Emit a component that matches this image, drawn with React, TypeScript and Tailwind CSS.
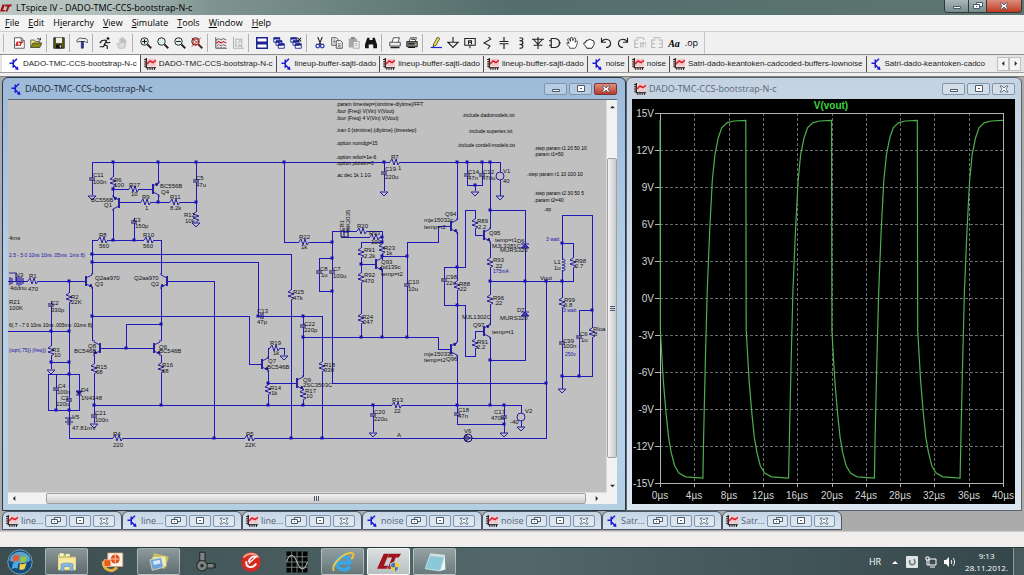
import type { ReactNode } from "react";
import clsx from "clsx";

// Menu entries, the underlined letter is given by its index
const menus = [
  { name: "File", key: 0 },
  { name: "Edit", key: 0 },
  { name: "Hierarchy", key: 1 },
  { name: "View", key: 0 },
  { name: "Simulate", key: 0 },
  { name: "Tools", key: 0 },
  { name: "Window", key: 0 },
  { name: "Help", key: 0 },
];

type DocKind = "schematic" | "plot";

const tabs: { kind: DocKind; title: string }[] = [
  { kind: "schematic", title: "DADO-TMC-CCS-bootstrap-N-c" },
  { kind: "plot", title: "DADO-TMC-CCS-bootstrap-N-c" },
  { kind: "schematic", title: "lineup-buffer-sajti-dado" },
  { kind: "plot", title: "lineup-buffer-sajti-dado" },
  { kind: "plot", title: "lineup-buffer-sajti-dado" },
  { kind: "schematic", title: "noise" },
  { kind: "plot", title: "noise" },
  { kind: "plot", title: "Satri-dado-keantoken-cadcoded-buffers-lownoise" },
  { kind: "schematic", title: "Satri-dado-keantoken-cadco" },
];

const minimized: { kind: DocKind; title: string }[] = [
  { kind: "plot", title: "line..." },
  { kind: "schematic", title: "line..." },
  { kind: "plot", title: "line..." },
  { kind: "schematic", title: "noise" },
  { kind: "plot", title: "noise" },
  { kind: "schematic", title: "Satr..." },
  { kind: "plot", title: "Satr..." },
];

// ---------------------------------------------------------------- icons

function LtLogo({ className }: { className: string }) {
  return (
    <svg viewBox="0 0 24 16" className={className} aria-hidden="true">
      <path d="M5 1h5L6 12h5l-2 3H0z" fill="#a01018" />
      <path d="M11 1h13l-2 4h-3l-4 10h-4l4-10h-5z" fill="#a01018" />
    </svg>
  );
}

function DocIcon({ kind }: { kind: DocKind }) {
  if (kind === "schematic") {
    return (
      <svg viewBox="0 0 16 16" className="w-3 h-3 shrink-0" aria-hidden="true">
        <path d="M2 7h5M7 2v11M7 6l5-5M7 9l6 6" stroke="#1a1ad8" strokeWidth="2" fill="none" />
        <path d="M14 16l-5-1 4-4z" fill="#1a1ad8" />
      </svg>
    );
  }
  return (
    <svg viewBox="0 0 16 16" className="w-3 h-3 shrink-0" aria-hidden="true">
      <path d="M4 1h12v10H4z" fill="#f3c8c8" />
      <path d="M3 0v13h13" stroke="#221111" strokeWidth="1.6" fill="none" />
      <path d="M0 2h3M0 5h3M0 8h3M0 11h3M5 13v3M8 13v3M11 13v3M14 13v3" stroke="#221111" strokeWidth="1.2" fill="none" />
      <path d="M4 8l4-4 4 2 4-3" stroke="#d8202c" strokeWidth="2" fill="none" />
    </svg>
  );
}

const lens = <circle cx="6" cy="6" r="5" fill="#dff1f1" stroke="#222" strokeWidth="1.3" />;
const handle = <path d="M10 10l5 5" stroke="#222" strokeWidth="2.4" />;
const gray = "#b4b4b4";

const icons: Record<string, ReactNode> = {
  "New schematic": (
    <>
      <path d="M2 1h9l4 4v10H2z" fill="#fff" stroke="#333" />
      <path d="M11 1v4h4" fill="none" stroke="#333" />
      <path d="M5 6l-2 6h4l1-2H6l2-4zM8 6h6l-1 2h-1l-2 4H8l2-4H8z" fill="#cc1c1c" />
    </>
  ),
  Open: (
    <>
      <path d="M1 14V4h5l1 2h6v3" fill="#f7ee70" stroke="#444" />
      <path d="M1 14l3-6h12l-3 6z" fill="#8d8a12" stroke="#333" />
      <path d="M9 3c2-2 4-1 5 1M14 1v3h-3" fill="none" stroke="#222" />
    </>
  ),
  Save: (
    <>
      <path d="M1 1h14v14H1z" fill="#5c5c18" stroke="#111" />
      <path d="M4 1h8v7H4z" fill="#eee" />
      <path d="M4 10h8v5H4z" fill="#111" />
      <path d="M9 11h2v3H9z" fill="#ddd" />
    </>
  ),
  "Control panel": (
    <>
      <path d="M1 5c2-4 5-4 8-3h4l3 3v2h-3l-1-1H4L2 7z" fill="#e8ecf4" stroke="#222" />
      <path d="M7 6h3v9H7z" fill="#2430b0" stroke="#111" strokeWidth="0.6" />
    </>
  ),
  Run: (
    <>
      <circle cx="12" cy="2" r="1.8" fill="#111" />
      <path d="M3 5l5-1 2 1-3 5 4 2v4M8 9l-2 4H1M9 6l2 2 4-1M1 8l3-3" stroke="#111" strokeWidth="1.5" fill="none" />
    </>
  ),
  Halt: <path d="M4 15l-3-6 1-1 3 2V3h2v5V1h2v7V2h2v7V4h2v7l-2 4z" fill="#dcdcdc" stroke={gray} />,
  "Zoom in": (
    <>
      {lens}
      {handle}
      <path d="M3 6h6M6 3v6" stroke="#111" strokeWidth="1.4" />
    </>
  ),
  Pan: (
    <>
      {lens}
      {handle}
    </>
  ),
  "Zoom out": (
    <>
      {lens}
      {handle}
      <path d="M3 6h6" stroke="#111" strokeWidth="1.4" />
    </>
  ),
  "Zoom fit": (
    <>
      {lens}
      {handle}
      <path d="M3 3h7v7H3zM1 1l13 12M13 1L1 13" stroke="#c82020" strokeWidth="1.2" fill="none" />
    </>
  ),
  "Autorange": (
    <>
      <path d="M1 0v15h15M1 4h2M1 8h2M4 15v-2M8 15v-2M12 15v-2" stroke="#333" fill="none" />
      <path d="M2 4l3-2 3 2 3-2 4 2" stroke="#333" fill="none" />
      <path d="M2 8l3-2 3 2 3-2 4 2" stroke="#c0202c" strokeWidth="1.4" fill="none" />
      <path d="M2 12l3-2 3 2 3-2 4 2" stroke="#7a3060" fill="none" />
    </>
  ),
  "Pick visible traces": (
    <path d="M2 0v15h14M5 12V3h8v9zM8 8l2-3 3 1M9 9l5 5" stroke={gray} strokeWidth="1.4" fill="none" />
  ),
  Tile: (
    <path d="M1 1h14v6H1zM1 9h14v6H1z" fill="#fff" stroke="#1c2490" strokeWidth="2" />
  ),
  Cascade: (
    <>
      <path d="M1 1h8v6H1zM4 5h8v6H4zM7 9h8v6H7z" fill="#fff" stroke="#1c2490" strokeWidth="1.2" />
      <path d="M1 2h8M4 6h8M7 10h8" stroke="#1c2490" strokeWidth="2.6" />
    </>
  ),
  "Close all": (
    <>
      <path d="M1 1h8v6H1zM4 5h8v6H4zM7 9h8v6H7z" fill="#fff" stroke="#1c2490" strokeWidth="1.2" />
      <path d="M1 2h8M4 6h8M7 10h8" stroke="#1c2490" strokeWidth="2.6" />
      <path d="M10 1l5 5M15 1l-5 5" stroke="#111" strokeWidth="1.4" />
    </>
  ),
  Cut: (
    <>
      <path d="M5 0l4 10M11 0L7 10" stroke="#222" strokeWidth="1.4" />
      <circle cx="5" cy="12" r="2.4" fill="none" stroke="#24309c" strokeWidth="1.6" />
      <circle cx="11" cy="12" r="2.4" fill="none" stroke="#24309c" strokeWidth="1.6" />
    </>
  ),
  Copy: (
    <>
      <path d="M1 1h6l2 2v8H1z" fill="#fff" stroke="#222" />
      <path d="M7 5h6l2 2v8H7z" fill="#fff" stroke="#222" />
      <path d="M3 4h3M3 6h3M3 8h3M9 9h4M9 11h4M9 13h4" stroke="#444" />
    </>
  ),
  Paste: (
    <>
      <path d="M1 2h11v12H1z" fill="#a8a8a8" />
      <path d="M4 0h5v3H4z" fill="#888" />
      <path d="M7 6h8v9H7z" fill="#eee" stroke="#999" />
      <path d="M9 9h4M9 11h4" stroke="#aaa" />
    </>
  ),
  Find: (
    <path d="M3 1h3v3h4V1h3l3 9v5h-5v-5H5v5H0v-5z" fill="#151515" />
  ),
  "Print setup": (
    <>
      <path d="M4 7l2-6h8l-2 6" fill="#fff" stroke="#222" />
      <path d="M1 7h14v5H1z" fill="#eee" stroke="#222" />
      <path d="M2 14h12" stroke="#222" strokeWidth="2" />
    </>
  ),
  Print: (
    <>
      <path d="M4 6l2-5h8l-2 5" fill="#fff" stroke="#222" />
      <path d="M1 6h14v7H1z" fill="#777" stroke="#111" />
      <path d="M3 9h8M3 14h9M7 3h5" stroke="#111" strokeWidth="1.6" />
      <path d="M12 10h2" stroke="#e6e040" strokeWidth="1.6" />
    </>
  ),
  Wire: (
    <>
      <path d="M4 13l1-4 5-9 3 2-5 9z" fill="#f0dc3c" stroke="#333" />
      <path d="M1 14h15" stroke="#1c24d0" strokeWidth="1.6" />
    </>
  ),
  Ground: <path d="M8 0v7M1 7h14l-7 7z" fill="none" stroke="#222" strokeWidth="1.5" />,
  "Label net": (
    <>
      <path d="M1 2h14v9H1zM8 11v4" fill="none" stroke="#222" strokeWidth="1.4" />
      <path d="M6 10V5h4v5M6 7h4" fill="none" stroke="#222" strokeWidth="1.4" />
    </>
  ),
  Resistor: <path d="M10 0l3 3-9 5 8 4-3 4" fill="none" stroke="#222" strokeWidth="1.4" />,
  Capacitor: <path d="M8 0v6M2 6h12M2 9h12M8 9v7" fill="none" stroke="#222" strokeWidth="1.6" />,
  Inductor: <path d="M6 1c6 0 6 4 0 4c6 0 6 5 0 5c6 0 6 5 0 5" fill="none" stroke="#222" strokeWidth="1.5" />,
  Diode: <path d="M0 3h16M8 0v16M2 3l6 7 6-7M2 11h12" fill="none" stroke="#222" strokeWidth="1.5" />,
  Component: <path d="M3 2h5c8 1 8 11 0 12H3zM0 5h3M0 11h3M13 8h3" fill="none" stroke="#222" strokeWidth="1.6" />,
  Move: (
    <path d="M5 15c0-3-4-4-4-7l2-1 1 2-2-6 2-1 2 4V1l2-1 1 5 2-4 2 1-1 5 3-2 1 1c-2 3-1 6-4 9z" fill="#fff" stroke="#222" />
  ),
  Drag: (
    <path d="M5 15c-1-3-4-4-4-7l3-1V5l3-1 2-1 2 1 3 1 1 3c0 3-2 4-3 7z" fill="#fff" stroke="#222" strokeWidth="1.3" />
  ),
  Undo: <path d="M2 1v6h6M2 7c4-7 13-4 12 3c-1 3-3 4-6 4" fill="none" stroke="#222" strokeWidth="1.5" />,
  Redo: <path d="M14 1v6H8M14 7C10 0 1 3 2 10c1 3 3 4 6 4" fill="none" stroke="#222" strokeWidth="1.5" />,
  Rotate: (
    <path d="M6 4H1v10h5M1 9h4M9 14V8h7v6M12 8v6M3 1h9l2 3" fill="none" stroke={gray} strokeWidth="1.4" />
  ),
  Mirror: (
    <path d="M6 4H1v10h5M1 9h4M10 4h5v10h-5M15 9h-4M3 1h10" fill="none" stroke={gray} strokeWidth="1.4" />
  ),
};

const toolGroups = [
  ["New schematic", "Open"],
  ["Save"],
  ["Control panel"],
  ["Run", "Halt"],
  ["Zoom in", "Pan", "Zoom out", "Zoom fit"],
  ["Autorange", "Pick visible traces"],
  ["Tile", "Cascade", "Close all"],
  ["Cut", "Copy", "Paste", "Find"],
  ["Print setup", "Print"],
  [
    "Wire", "Ground", "Label net", "Resistor", "Capacitor", "Inductor", "Diode",
    "Component", "Move", "Drag", "Undo", "Redo", "Rotate", "Mirror",
  ],
];

const arrowPaths = {
  up: "M0 4l3-3 3 3z",
  down: "M0 2h6L3 5z",
  left: "M4 0v6L1 3z",
  right: "M2 0l3 3-3 3z",
};

function Arrow({ to }: { to: keyof typeof arrowPaths }) {
  return (
    <svg viewBox="0 0 6 6" className="w-[5px] h-[5px]" aria-hidden="true">
      <path d={arrowPaths[to]} fill="#2c2c2c" />
    </svg>
  );
}

// ---------------------------------------------------------------- schematic

// Every wire is a polyline on the sheet
const wires = [
  "92,161 500,161",
  "92,161 92,194",
  "113,161 113,196",
  "113,188 152,188",
  "158,161 158,182",
  "158,194 158,201",
  "119,201 196,201",
  "196,161 196,221",
  "113,208 113,239",
  "92,273 92,239 161,239 161,273",
  "134,217 134,239",
  "90,253 291,253 291,437",
  "92,261 258,261 258,315 322,315 322,437",
  "8,280 85,280",
  "168,280 214,280 214,437",
  "92,286 92,340",
  "161,286 161,340",
  "92,315 249,315 249,363 262,363",
  "161,323 126,323 126,347",
  "101,347 154,347",
  "94,354 94,422",
  "161,354 161,404",
  "94,404 521,404",
  "69,280 69,437 546,437 546,280",
  "8,330 69,330",
  "51,300 51,368",
  "51,361 69,361",
  "48,373 79,373 79,409 48,409 48,373",
  "56,373 56,409",
  "284,161 284,241 332,241",
  "332,230 382,230 382,259",
  "341,236 382,236",
  "382,241 361,241 361,336",
  "332,230 332,382 546,382",
  "361,263 375,263",
  "382,268 382,336",
  "382,255 407,255",
  "407,336 407,241 438,241 438,225 450,225",
  "332,257 319,257 319,290 332,290",
  "384,161 384,190",
  "303,315 303,376",
  "303,336 438,336 438,348 450,348",
  "268,358 268,347 284,347 284,354",
  "268,369 268,404",
  "268,382 297,382",
  "303,388 303,404",
  "373,404 373,431",
  "457,161 457,219",
  "457,231 457,341",
  "457,354 457,423 504,423",
  "457,266 465,266 465,209 475,209 475,234 483,234",
  "457,266 444,266 444,304 465,304 465,355 475,355 475,330 483,330",
  "490,161 490,228",
  "490,241 490,324",
  "490,336 490,404",
  "467,161 467,184 482,184 482,161",
  "475,184 475,190",
  "500,161 500,195",
  "490,209 525,209 525,359 490,359",
  "490,280 573,280 573,242 562,242",
  "562,388 562,214 592,214 592,375 562,375",
  "592,309 579,309 579,375",
  "504,404 504,432",
  "521,404 521,426",
];

const nodes = [
  [113, 161], [158, 161], [196, 161], [284, 161], [384, 161], [457, 161], [467, 161], [482, 161], [490, 161],
  [113, 188], [158, 201], [196, 201], [113, 239], [134, 239], [92, 253], [92, 261], [69, 280],
  [92, 315], [161, 323], [126, 347], [51, 330], [69, 330], [51, 361], [69, 361], [69, 373], [56, 409], [69, 409],
  [94, 404], [161, 404], [268, 404], [303, 404], [373, 404], [457, 404], [490, 404], [504, 404], [504, 423],
  [214, 437], [291, 437], [322, 437], [268, 382], [258, 315], [303, 315], [303, 336], [361, 336], [382, 336], [407, 336],
  [332, 241], [332, 257], [332, 290], [382, 236], [382, 241], [382, 255], [407, 255], [361, 263],
  [457, 266], [457, 304], [490, 209], [490, 280], [525, 280], [546, 280], [562, 280], [562, 242],
  [490, 359], [546, 382], [592, 309], [562, 375], [579, 375], [475, 184],
];

const vResistors = [
  [113, 181], [196, 216], [69, 297], [51, 350], [94, 368], [161, 367], [291, 294], [361, 252], [361, 277], [361, 318],
  [382, 248], [322, 366], [268, 389], [303, 394], [457, 285], [475, 223], [490, 262], [490, 299], [475, 343],
  [573, 262], [562, 302], [592, 332],
];

const hResistors = [
  [134, 188], [146, 201], [175, 201], [103, 239], [149, 239], [33, 280], [118, 437], [250, 437], [304, 241],
  [362, 230], [375, 236], [395, 161], [397, 404], [275, 347],
];

const capacitors = [
  [92, 178], [196, 180], [134, 221], [51, 304], [56, 388], [69, 399], [94, 415], [319, 271], [332, 271], [407, 284],
  [384, 172], [303, 325], [373, 414], [444, 279], [457, 413], [467, 174], [482, 174], [562, 342], [579, 336], [504, 416],
];

const grounds = [
  [92, 195], [196, 222], [51, 369], [94, 423], [384, 191], [284, 355], [373, 432], [475, 191], [500, 195],
  [562, 388], [504, 432], [521, 426],
];

// x, y of the base bar, side of the collector and emitter, arrow end
const transistors: [number, number, number, string][] = [
  [119, 202, -1, "up"],
  [153, 188, 1, "up"],
  [86, 280, 1, "down"],
  [167, 280, -1, "down"],
  [100, 347, -1, "down"],
  [154, 347, 1, "down"],
  [262, 363, 1, "down"],
  [297, 382, 1, "down"],
  [376, 263, 1, "down"],
  [451, 225, 1, "down"],
  [451, 348, 1, "up"],
  [484, 234, 1, "down"],
  [484, 330, 1, "up"],
];

const labels: [number, number, string][] = [
  [93, 176, "C11"], [93, 183, "100n"], [114, 181, "R6"], [114, 186, "100"], [129, 186, "R27"], [131, 195, "10"],
  [91, 201, "BC556B"], [104, 206, "Q1"], [142, 198, "R9"], [145, 209, "1"], [170, 198, "R11"], [170, 209, "8.2k"],
  [160, 187, "BC556B"], [161, 193, "Q4"], [196, 179, "C5"], [196, 186, "47u"], [184, 216, "R12"], [185, 222, "10k"],
  [133, 221, "C3"], [135, 227, "150p"], [99, 236, "R8"], [99, 247, "560"], [143, 236, "R10"], [143, 247, "560"],
  [9, 239, "4ms"], [95, 279, "Q2aa970"], [95, 285, "Q3"], [134, 279, "Q2aa970"], [151, 285, "Q2"],
  [16, 276, "V3"], [29, 277, "R1"], [28, 290, "470"], [10, 289, "4ddnu"], [9, 303, "R21"], [9, 309, "100K"],
  [51, 304, "C2"], [51, 311, "330p"], [71, 298, "R2"], [71, 303, "22K"],
  [52, 351, "R3"], [54, 356, "10"],
  [88, 347, "Q8"], [74, 352, "BC546B"], [159, 348, "Q6"], [159, 352, "BC546B"], [96, 368, "R15"], [96, 373, "68"],
  [162, 366, "R16"], [162, 372, "68"], [58, 387, "C4"], [57, 393, "100n"], [61, 399, "C3"], [56, 405, "220u"],
  [81, 391, "D4"], [81, 399, "1N4148"], [72, 418, "V5"], [72, 429, "47.81mV"], [95, 414, "C21"], [95, 421, "100n"],
  [113, 435, "R4"], [113, 446, "220"], [246, 435, "R5"], [245, 446, "22K"], [299, 238, "R22"], [301, 248, "1k"],
  [391, 158, "R7"], [398, 169, "1"], [385, 170, "C19"], [385, 178, "220u"], [357, 227, "R20"], [369, 234, "R93"],
  [371, 243, "100"], [384, 249, "R23"], [386, 254, "1k"], [364, 251, "R91"], [364, 257, "2.2k"], [364, 276, "R92"],
  [364, 282, "470"], [381, 263, "Q93"], [381, 268, "bd139c"], [381, 275, "temp=t2"], [320, 270, "C8"], [321, 276, "1u"],
  [333, 270, "C7"], [333, 277, "100u"], [408, 283, "C10"], [408, 290, "10u"], [293, 293, "R25"], [293, 299, "47k"],
  [257, 312, "C13"], [257, 323, "47p"], [304, 325, "C22"], [304, 331, "220p"], [362, 318, "R24"], [363, 323, "247"],
  [270, 344, "R19"], [273, 354, "1k"], [268, 362, "Q7"], [267, 368, "BC546B"], [324, 366, "R18"], [324, 371, "330"],
  [303, 381, "Q9"], [303, 386, "2SC3503C"], [270, 389, "R14"], [271, 394, "1k"], [305, 392, "R17"], [306, 397, "10"],
  [392, 401, "R13"], [394, 412, "22"], [374, 413, "C20"], [374, 420, "220u"], [397, 436, "A"],
  [468, 173, "C14"], [468, 179, "47n"], [483, 173, "C12"], [482, 179, "470u"], [503, 172, "V1"], [503, 182, "40"],
  [445, 215, "Q94"], [424, 221, "mje15032c"], [424, 228, "temp=t2"], [477, 222, "R89"], [478, 228, "2.2"],
  [489, 234, "Q95"], [495, 241, "temp=t1"], [492, 247, "MJL3281C"], [500, 251, "MURS320"], [517, 242, "D6"],
  [493, 261, "R93"], [494, 267, ".22"], [540, 279, "Vout"], [446, 278, "C98"], [446, 284, "22u"], [459, 285, "R88"],
  [460, 290, "22"], [493, 299, "R96"], [494, 304, ".22"], [517, 311, "D7"], [500, 319, "MURS320"],
  [462, 318, "MJL1302C"], [473, 326, "Q97"], [492, 333, "temp=t1"], [477, 343, "R91"], [477, 348, "2.2"],
  [424, 355, "mje15033c"], [424, 361, "temp=t2"], [446, 360, "Q96"], [458, 411, "C18"], [458, 417, "47n"],
  [494, 413, "C17"], [491, 419, "470u"], [525, 412, "V2"], [510, 423, "-40"], [464, 432, "V6"],
  [554, 263, "L1"], [554, 269, "1u"], [575, 262, "R98"], [575, 267, "2.7"], [564, 301, "R99"], [564, 306, "6.8"],
  [563, 342, "C99"], [563, 347, "100n"], [580, 335, "C6"], [581, 341, "1u"], [593, 330, "Rloa"], [594, 335, "8"],
];

const directives: [number, number, string][] = [
  [336, 105, ".param timestep=(simtime-dlytime)/FFT"],
  [336, 112, ".four {Freq} V(Vin) V(Vout)"],
  [336, 119, ".four {Freq} 4 V(Vin) V(Vout)"],
  [336, 131, ".tran 0 {simtime} {dlytime} {timestep}"],
  [336, 144, ".option numdgt=15"],
  [336, 158, ".option reltol=1e-6"],
  [336, 164, ".option plotwin=0"],
  [336, 176, ".ac dec 1k 1 1G"],
  [462, 116, ".include dadomodels.txt"],
  [468, 132, ".include supertex.txt"],
  [457, 146, ".include cordell-models.txt"],
  [534, 149, ".step param t1 20 50 10"],
  [534, 155, ".param t1=50"],
  [527, 175, ".step param r1 10 100 10"],
  [534, 194, ".step param t2  30 50 5"],
  [534, 201, ".param t2=40"],
  [544, 210, ".op"],
  [9, 326, "6(.7 -.7 0 10ns 10ns .005ms .01ms 8)"],
];

const notes: [number, number, string][] = [
  [9, 256, "2.5 -.5 0 10ns 10ns .05ms .1ms 8)"],
  [9, 351, "{sqrt(.75)} {freq})"],
  [546, 240, "3 watt"],
  [493, 272, "175mA"],
  [563, 311, "3 watt"],
  [565, 355, "250v"],
];

const SHEET = "#c0c0c0";

function Schematic() {
  return (
    <svg
      viewBox="8 99 598 391"
      preserveAspectRatio="xMinYMin meet"
      className="block w-full h-full font-['Liberation_Sans',sans-serif]"
      role="img"
      aria-label="Amplifier schematic"
    >
      <g fill="none" stroke="#2018b8" strokeWidth="1" shapeRendering="crispEdges">
        {wires.map((points) => (
          <polyline key={points} points={points} />
        ))}
      </g>
      {nodes.map(([x, y]) => (
        <rect key={`${x}-${y}`} x={x - 1.5} y={y - 1.5} width="3" height="3" fill="#1810b0" />
      ))}

      <g fill="none" stroke="#2820a0" strokeWidth="1">
        {vResistors.map(([x, y]) => (
          <g key={`${x}-${y}`} transform={`translate(${x} ${y})`}>
            <rect x="-2" y="-5" width="4" height="10" fill={SHEET} stroke="none" />
            <path d="M0-5l-3 2 6 2-6 2 6 2-3 2" />
          </g>
        ))}
        {hResistors.map(([x, y]) => (
          <g key={`${x}-${y}`} transform={`translate(${x} ${y})`}>
            <rect x="-5" y="-2" width="10" height="4" fill={SHEET} stroke="none" />
            <path d="M-5 0l2-3 2 6 2-6 2 6 2-3" />
          </g>
        ))}
        {capacitors.map(([x, y]) => (
          <g key={`${x}-${y}`} transform={`translate(${x} ${y})`}>
            <rect x="-1" y="-1" width="2" height="2" fill={SHEET} stroke="none" />
            <path d="M-3-1h6M-3 1h6" stroke="#18106c" />
          </g>
        ))}
        <path d="M261 312v6M263 312v6" stroke="#18106c" />
        {grounds.map(([x, y]) => (
          <path key={`${x}-${y}`} d={`M${x - 4} ${y}h8l-4 4z`} />
        ))}
        {transistors.map(([x, y, side, arrow]) => (
          <g key={`${x}-${y}`} transform={`translate(${x} ${y}) scale(${side} 1)`}>
            <path d="M0-5v10" strokeWidth="2" />
            <path d="M0-3l6-3v-2M0 3l6 3v2" />
            <path d={arrow === "up" ? "M2-5l3-1-1 3z" : "M3 5l3 1-1-3z"} fill="#18106c" />
          </g>
        ))}

        {/* Sources */}
        <circle cx="500" cy="175" r="4" fill={SHEET} />
        <circle cx="521" cy="416" r="4" fill={SHEET} />
        <circle cx="468" cy="437" r="4" fill={SHEET} stroke="#18106c" />
        <path d="M463 437h10M466 434l4 3-4 3z" stroke="#18106c" />
        <path d="M65 417h8M67 419h4M65 421h8M67 423h4" stroke="#18106c" strokeWidth="1.2" />
        <path d="M10 276v8M12 277v6M17 276v8M19 275v10M21 276v8M23 277v6M9 272h7v8" strokeWidth="1.2" />

        {/* Diodes, inductor, ferrite and the jfet on the bias rail */}
        <path d="M76 390h6l-3 4zM76 394h6" fill="#18106c" />
        <path d="M521 247h8l-4-4zM521 243h8M521 315h8l-4-4zM521 311h8" fill="#4038a8" />
        <rect x="560" y="259" width="4" height="10" fill={SHEET} stroke="none" />
        <path d="M562 258c4 0 4 3 0 3c4 0 4 3 0 3c4 0 4 3 0 3c4 0 4 3 0 3" />
        <path d="M341 231v5M344 227v9M348 227v9M349 231h-6M341 236h8" stroke="#18106c" />
      </g>

      <g fontSize="6" fill="#101018">
        {labels.map(([x, y, text]) => (
          <text key={`${x}-${y}`} x={x} y={y}>{text}</text>
        ))}
        <text transform="translate(344 230) rotate(-90)">FB1</text>
        <text transform="translate(350 230) rotate(-90)">BK2035</text>
      </g>
      <g fontSize="5" fill="#000">
        {directives.map(([x, y, text]) => (
          <text key={`${x}-${y}`} x={x} y={y}>{text}</text>
        ))}
      </g>
      <g fontSize="5" fill="#1c14a8">
        {notes.map(([x, y, text]) => (
          <text key={`${x}-${y}`} x={x} y={y}>{text}</text>
        ))}
      </g>
    </svg>
  );
}

// ---------------------------------------------------------------- waveform

const PLOT = { left: 660, right: 1003, top: 113, bottom: 483 };
const volts = [15, 12, 9, 6, 3, 0, -3, -6, -9, -12, -15];
const times = [0, 4, 8, 12, 16, 20, 24, 28, 32, 36, 40];

const plotX = (us: number) => PLOT.left + ((PLOT.right - PLOT.left) * us) / 40;
const plotY = (v: number) => PLOT.top + ((PLOT.bottom - PLOT.top) * (15 - v)) / 30;

// One 10us period: exponential fall, then a slower settling rise
const fall = [[0.05, -2.6], [0.2, -4.5], [0.4, -6.8], [0.7, -9.3], [1, -11.3], [1.3, -12.5], [1.7, -13.6], [2.2, -14.2], [3, -14.5], [5, -14.6]];
const rise = [[5.1, -11], [5.3, -5], [5.5, 0.5], [5.8, 5.5], [6.1, 9.5], [6.4, 11.6], [6.8, 13], [7.2, 13.8], [7.8, 14.2], [8.6, 14.35], [10, 14.4]];

function tracePoints() {
  const points = [[0, 14.4]];
  for (let start = 0; start < 40; start += 10) {
    for (const [t, v] of [...fall, ...rise]) points.push([start + t, v]);
  }
  return points.map(([t, v]) => `${plotX(t).toFixed(1)},${plotY(v).toFixed(1)}`).join(" ");
}

function Waveform() {
  return (
    <svg
      viewBox="632 99 383 404"
      preserveAspectRatio="xMinYMin meet"
      className="block w-full h-full font-['Liberation_Sans',sans-serif]"
      role="img"
      aria-label="V(vout) over time"
    >
      <g stroke="#6c6c6c" strokeDasharray="3 2" shapeRendering="crispEdges">
        {volts.slice(1, -1).map((v) => (
          <path key={v} d={`M${PLOT.left} ${Math.round(plotY(v))}H${PLOT.right}`} />
        ))}
        {times.slice(1, -1).map((t) => (
          <path key={t} d={`M${Math.round(plotX(t))} ${PLOT.top}V${PLOT.bottom}`} />
        ))}
      </g>
      <g stroke="#b4b4b4" fill="none" shapeRendering="crispEdges">
        <path d={`M${PLOT.left} ${PLOT.top}H${PLOT.right}V${PLOT.bottom}H${PLOT.left}z`} />
        {volts.map((v) => (
          <path key={v} d={`M${PLOT.left - 5} ${Math.round(plotY(v))}h5`} />
        ))}
        {times.map((t) => (
          <path key={t} d={`M${Math.round(plotX(t))} ${PLOT.bottom}v4`} />
        ))}
      </g>
      <polyline points={tracePoints()} fill="none" stroke="#4fae4f" strokeWidth="1.2" />
      <g fontSize="10" fill="#d4d4d4">
        {volts.map((v) => (
          <text key={v} x={PLOT.left - 6} y={Math.round(plotY(v)) + 4} textAnchor="end">{v}V</text>
        ))}
        {times.map((t) => (
          <text key={t} x={Math.round(plotX(t))} y="499" textAnchor="middle">{t}µs</text>
        ))}
      </g>
      <text x="831" y="109" fontSize="10" fontWeight="bold" fill="#3fd43f" textAnchor="middle">V(vout)</text>
    </svg>
  );
}

// ---------------------------------------------------------------- windows

type Glyph = "min" | "max" | "restore" | "close";

function CaptionGlyph({ glyph }: { glyph: Glyph }) {
  return (
    <svg viewBox="0 0 10 8" className="w-[10px] h-2" aria-hidden="true">
      {glyph === "min" && <path d="M1.5 4.5h7v2h-7z" fill="#fff" stroke="#4a5868" />}
      {glyph === "max" && (
        <>
          <path d="M1.5.5h7v6h-7z" fill="#fff" stroke="#4a5868" />
          <path d="M4 3h2v1H4z" fill="#4a5868" />
        </>
      )}
      {glyph === "restore" && (
        <>
          <path d="M3.5.5h6v4h-6z" fill="#fff" stroke="#4a5868" />
          <path d="M.5 2.5h6v4h-6z" fill="#fff" stroke="#4a5868" />
          <path d="M3 4h1v1H3z" fill="#4a5868" />
        </>
      )}
      {glyph === "close" && (
        <path d="M1 1h2l2 2 2-2h2L7 4l2 3H7L5 5 3 7H1l2-3z" fill="#fff" stroke="#4a5868" strokeWidth="0.8" />
      )}
    </svg>
  );
}

function CaptionButton({ glyph, label, danger }: { glyph: Glyph; label: string; danger?: boolean }) {
  return (
    <button
      aria-label={label}
      className={clsx(
        "flex items-center justify-center w-[23px] h-3 rounded-xs border",
        danger
          ? "border-[#7c3434] bg-linear-to-b from-[#e09080] to-[#b83424]"
          : "border-[#7f94ad] bg-white/25",
      )}
    >
      <CaptionGlyph glyph={glyph} />
    </button>
  );
}

function ChildWindow({ kind, title, active, className, children }: {
  kind: DocKind;
  title: string;
  active?: boolean;
  className: string;
  children: ReactNode;
}) {
  return (
    <section
      className={clsx(
        "flex flex-col min-w-0 rounded-t-md border pl-[5px] pb-[6px]",
        active
          ? "border-[#26384a] bg-linear-to-b from-[#9dbad8] via-[#b9d2ea] to-[#b4cfe2]"
          : "border-[#59636e] bg-linear-to-b from-[#c4d2e1] to-[#dbe6f1]",
        className,
      )}
    >
      <header className="flex items-center gap-[2px] h-[21px] shrink-0 pl-[2px]">
        <DocIcon kind={kind} />
        <h2 className={clsx("grow truncate pl-px text-[9px]", active ? "text-[#1c2a3c]" : "text-[#5a6878]")}>
          {title}
        </h2>
        <CaptionButton glyph="min" label="Minimize" />
        <CaptionButton glyph="max" label="Maximize" />
        <CaptionButton glyph="close" label="Close" danger={active} />
      </header>
      {children}
    </section>
  );
}

function SheetPane() {
  return (
    <div className="grid grow min-h-0 grid-cols-[1fr_11px] grid-rows-[1fr_12px] border-t border-[#5c6470] bg-[#c0c0c0]">
      <div className="min-w-0 min-h-0 overflow-hidden">
        <Schematic />
      </div>
      <div className="flex flex-col bg-[#f1f1f1] border-l border-[#dcdcdc]">
        <button aria-label="Scroll up" className="h-[58px] pt-[5px] flex justify-center"><Arrow to="up" /></button>
        <button
          aria-label="Vertical position"
          className="h-[300px] shrink-0 rounded-xs border border-[#a0a0a0] bg-linear-to-r from-[#f4f4f4] to-[#c9c9c9] flex flex-col items-center justify-center gap-px"
        >
          <span className="w-[5px] h-px bg-gray-600" />
          <span className="w-[5px] h-px bg-gray-600" />
          <span className="w-[5px] h-px bg-gray-600" />
        </button>
        <button aria-label="Scroll down" className="grow pb-1 flex items-end justify-center"><Arrow to="down" /></button>
      </div>
      <div className="flex bg-[#f1f1f1] border-t border-[#dcdcdc]">
        <button aria-label="Scroll left" className="w-[38px] pl-1 flex items-center"><Arrow to="left" /></button>
        <button
          aria-label="Horizontal position"
          className="grow rounded-xs border border-[#a0a0a0] bg-linear-to-b from-[#f4f4f4] to-[#c9c9c9] flex items-center justify-center gap-px"
        >
          <span className="w-px h-[5px] bg-gray-600" />
          <span className="w-px h-[5px] bg-gray-600" />
          <span className="w-px h-[5px] bg-gray-600" />
        </button>
        <button aria-label="Scroll right" className="w-5 flex items-center justify-center"><Arrow to="right" /></button>
      </div>
      <div className="bg-[#f1f1f1]" />
    </div>
  );
}

// ---------------------------------------------------------------- task bar

const taskIcons: { name: string; state: "open" | "active" | "idle"; art: ReactNode }[] = [
  {
    name: "Explorer",
    state: "open",
    art: (
      <>
        <path d="M4 5h10l2 3h12v18H4z" fill="#e6cf74" />
        <path d="M5 10h22v15H5z" fill="#f6eaa4" />
        <path d="M6 3h6v5H6zM14 4h6v4h-6z" fill="#fbf6d0" stroke="#6c9a50" strokeWidth="0.6" />
        <path d="M8 27v-9c0-2 16-2 16 0v9h-4v-6h-8v6z" fill="#86b8e0" stroke="#4f86b8" strokeWidth="0.8" />
      </>
    ),
  },
  {
    name: "PowerPoint",
    state: "idle",
    art: (
      <>
        <path d="M3 14c0 14 14 15 18 8" fill="none" stroke="#e8b040" strokeWidth="4" />
        <path d="M9 3h20v18H9z" fill="#fdf3ea" stroke="#d9a07c" />
        <circle cx="19" cy="11" r="6" fill="#e0501c" />
        <path d="M19 5v12M13 11h12" stroke="#f8c8a0" strokeWidth="1.4" />
        <path d="M4 12h9v9H4z" fill="#e85c1c" stroke="#f7c49c" />
      </>
    ),
  },
  {
    name: "Pictures",
    state: "open",
    art: (
      <>
        <path d="M9 3l20 5-5 16-18-3z" fill="#c4c06c" />
        <path d="M7 8l18-1 1 14-18 2z" fill="#f2eab0" stroke="#b0a450" strokeWidth="0.6" />
        <path d="M4 12l15-3 3 13-15 4z" fill="#6ca4d8" stroke="#e6e6c0" />
        <path d="M8 14l9-2 1 5-9 2z" fill="#d3e9fb" />
      </>
    ),
  },
  {
    name: "Plumber",
    state: "idle",
    art: (
      <g fill="#7d8482" stroke="#23282a" strokeWidth="1.4">
        <path d="M9 2h7v12H9zM14 17h14v6H14zM28 18h2v4h-2z" />
        <circle cx="12" cy="20" r="7" />
        <circle cx="12" cy="20" r="1.6" fill="#23282a" />
      </g>
    ),
  },
  {
    name: "CCleaner",
    state: "idle",
    art: (
      <>
        <circle cx="16" cy="15" r="13" fill="#d42a22" />
        <path d="M6 9c6-7 16-6 20 0" fill="none" stroke="#f49888" strokeWidth="3" />
        <path d="M10 14c-2 8 8 11 13 3M23 9c-4-3-9 0-10 6" fill="none" stroke="#fff" strokeWidth="2.4" />
        <path d="M13 17L24 7" stroke="#fff" strokeWidth="1.6" />
      </>
    ),
  },
  {
    name: "Oscilloscope",
    state: "idle",
    art: (
      <>
        <path d="M2 1h28v28H2z" fill="#050505" />
        <path d="M9 1v28M16 1v28M23 1v28M2 8h28M2 15h28M2 22h28" stroke="#8f9c9c" strokeWidth="1" />
        <path d="M2 15c4-12 9-12 14 0s10 12 14 0" fill="none" stroke="#9fb8b0" strokeWidth="1.4" />
      </>
    ),
  },
  {
    name: "Internet Explorer",
    state: "open",
    art: (
      <>
        <path d="M25 21c-4 7-18 5-18-5S25 4 25 16H9" fill="none" stroke="#3aa6e4" strokeWidth="5" />
        <path d="M4 27C-1 20 16 2 28 3c4 1 1 6-1 8" fill="none" stroke="#f2c83c" strokeWidth="2.4" />
      </>
    ),
  },
  {
    name: "LTspice",
    state: "active",
    art: (
      <>
        <path d="M9 4h7L9 20h6l-2 4H0z" fill="#a01420" />
        <path d="M16 4h16l-3 5h-4l-6 15h-5l6-15h-6z" fill="#a01420" />
        <path d="M18 17l6-2 6 2c0 6-2 9-6 12c-4-3-6-6-6-12z" fill="#3a78c8" stroke="#eee" />
        <path d="M24 15l6 2v5h-6zM18 22h6v7c-3-2-5-4-6-7z" fill="#f2cc3a" />
      </>
    ),
  },
  {
    name: "Notepad",
    state: "open",
    art: (
      <>
        <path d="M10 4l19 2-6 21-20-3z" fill="#8cc9d8" stroke="#d9eef2" />
        <path d="M11 4l18 2 0 3-19-2z" fill="#d2dfe2" />
        <path d="M29 7l1 18-7 2z" fill="#e9f4f5" />
      </>
    ),
  },
];

function TaskBar() {
  return (
    <footer className="flex items-center h-7 shrink-0 border-t border-[#28383c] bg-linear-to-r from-[#3c4d50] via-[#52686a] to-[#35464a] text-white">
      <button aria-label="Start" className="w-[45px] h-full flex items-center pl-[6px]">
        <svg viewBox="0 0 32 32" className="w-7 h-[26px]" aria-hidden="true">
          <circle cx="16" cy="16" r="15" fill="#164a78" stroke="#8cb8cc" />
          <path d="M3 14c2-14 24-14 26 0-8 5-18 5-26 0z" fill="#5f9fcb" />
          <path d="M8 9c3-2 5-2 7-1l-1 7c-2-1-4-1-7 1z" fill="#e8582c" />
          <path d="M17 9c3 1 5 1 8-1l-2 7c-2 2-4 2-7 1z" fill="#8fc640" />
          <path d="M7 18c3-2 5-2 7-1l-1 7c-2-1-4-1-7 1z" fill="#4aa8e8" />
          <path d="M16 18c3 1 5 1 8-1l-2 7c-2 2-4 2-7 1z" fill="#f8d048" />
        </svg>
      </button>
      <nav className="flex gap-[3px] h-full">
        {taskIcons.map((task) => (
          <button
            key={task.name}
            aria-label={task.name}
            className={clsx(
              "w-[43px] h-full flex items-center justify-center rounded-xs border",
              task.state === "idle" && "border-transparent",
              task.state === "open" && "border-white/40 bg-linear-to-b from-white/40 to-white/15",
              task.state === "active" && "border-white/80 bg-linear-to-b from-white/80 to-white/60",
            )}
          >
            <svg viewBox="0 0 32 30" className="w-6 h-6" aria-hidden="true">{task.art}</svg>
          </button>
        ))}
      </nav>
      <div className="grow" />
      <span className="text-[9px] mr-[10px]">HR</span>
      <div className="flex items-center gap-[7px] mr-[9px]">
        <svg viewBox="0 0 8 8" className="w-2 h-2" aria-hidden="true"><path d="M1 6l3-3 3 3z" fill="#fff" /></svg>
        <svg viewBox="0 0 12 12" className="w-3 h-3" aria-hidden="true">
          <rect width="12" height="12" rx="1" fill="#dfe5e5" />
          <path d="M4 4c-2 6 5 6 5 2L8 3" fill="none" stroke="#6c7a7c" strokeWidth="1.6" />
        </svg>
        <svg viewBox="0 0 12 12" className="w-3 h-3" aria-hidden="true">
          <path d="M4 3h7v6H4zM1 1h3v3H1zM5 11h5M2 4v5h2" fill="none" stroke="#fff" />
        </svg>
        <svg viewBox="0 0 12 12" className="w-3 h-3" aria-hidden="true">
          <path d="M0 4h2l3-3v10L2 8H0z" fill="#fff" />
          <path d="M7 4c1 1 1 3 0 4M9 2c2 2 2 6 0 8" fill="none" stroke="#fff" />
        </svg>
      </div>
      <time className="text-[8px] leading-[12px] text-center mr-[5px]">
        <span className="block">9:13</span>
        <span className="block">28.11.2012.</span>
      </time>
      <button aria-label="Show desktop" className="w-[11px] h-full border-l border-white/40 bg-white/10" />
    </footer>
  );
}

// ---------------------------------------------------------------- page

export default function App() {
  return (
    <div className="flex flex-col h-screen overflow-hidden bg-[#f0f0f0] font-['Open_Sans',sans-serif] text-black">
      {/* Title bar */}
      <header className="flex items-start justify-between h-[15px] shrink-0 bg-linear-to-r from-[#9fb0ab] via-[#536e6b] to-[#5d7672] pr-[2px]">
        <div className="flex items-center gap-1 h-[15px] w-[210px] bg-linear-to-r from-white/30 via-white/30 to-transparent">
          <LtLogo className="w-3 h-2" />
          <h1 className="text-[9px] leading-[15px] whitespace-nowrap">LTspice IV - DADO-TMC-CCS-bootstrap-N-c</h1>
        </div>
        <div className="flex h-[13px] rounded-b-sm border border-t-0 border-[#31393c] overflow-hidden">
          <button aria-label="Minimize" className="w-6 flex items-center justify-center border-r border-[#31393c] bg-linear-to-b from-[#aab6b6] to-[#788c8c]">
            <CaptionGlyph glyph="min" />
          </button>
          <button aria-label="Restore" className="w-[18px] flex items-center justify-center border-r border-[#31393c] bg-linear-to-b from-[#aab6b6] to-[#788c8c]">
            <CaptionGlyph glyph="restore" />
          </button>
          <button aria-label="Close" className="w-[34px] flex items-center justify-center bg-linear-to-b from-[#dc8c7c] to-[#c03818]">
            <CaptionGlyph glyph="close" />
          </button>
        </div>
      </header>

      {/* Menu */}
      <nav className="flex items-center gap-[9px] h-[17px] shrink-0 pl-[5px] border-b border-[#cfcfcf] bg-[#f3f3f3] text-[9px]">
        {menus.map(({ name, key }) => (
          <button key={name} className="leading-3">
            {name.slice(0, key)}
            <u>{name[key]}</u>
            {name.slice(key + 1)}
          </button>
        ))}
      </nav>

      {/* Toolbar */}
      <div className="flex items-center h-[23px] shrink-0 pl-[3px] border-b border-[#8c8c8c]">
        <span className="w-px h-[18px] mr-[6px] bg-[#b8b8b8]" />
        {toolGroups.map((group, index) => (
          <div key={group[0]} className="flex items-center">
            {index > 0 && (
              <span className={clsx("h-[18px] border-l border-[#b0b0b0] ml-[2px]", index > 3 ? "w-[5px]" : "w-1")} />
            )}
            {group.map((tool) => (
              <button key={tool} aria-label={tool} className="w-[17px] h-[17px] flex items-center justify-center">
                <svg viewBox="0 0 16 16" className="w-3 h-3" aria-hidden="true">{icons[tool]}</svg>
              </button>
            ))}
          </div>
        ))}
        <button className="w-[18px] text-[10px] font-bold italic font-['Liberation_Serif',serif]">Aa</button>
        <button className="w-[17px] text-[9px] leading-3">.op</button>
        <span className="w-px h-full ml-1 bg-[#c4c4c4]" />
      </div>

      {/* Document tabs */}
      <div className="flex h-[18px] shrink-0 pl-[2px] pr-[3px] border-b border-[#9c9c9c] bg-[#e4e4e4] font-['Liberation_Sans',sans-serif] text-[8px] text-[#1c1c1c]">
        <div role="tablist" className="flex grow min-w-0 overflow-hidden">
          {tabs.map((tab, index) => (
            <button
              key={index}
              role="tab"
              aria-selected={index === 0}
              className={clsx(
                "flex items-center gap-[3px] shrink-0 whitespace-nowrap pr-[3px]",
                index === 0 ? "bg-white pl-[6px]" : "bg-[#ececec] pl-[3px] mt-px",
                index < tabs.length - 1 ? "border-r border-[#505050]" : "grow",
              )}
            >
              <DocIcon kind={tab.kind} />
              {tab.title}
            </button>
          ))}
        </div>
        <button aria-label="Previous tabs" className="flex items-center justify-center w-3 h-[14px] self-center shrink-0 border border-[#c0c0c0] bg-[#f4f4f4]">
          <Arrow to="left" />
        </button>
        <button aria-label="Next tabs" className="flex items-center justify-center w-3 h-[14px] self-center shrink-0 border border-[#c0c0c0] bg-[#f4f4f4]">
          <Arrow to="right" />
        </button>
      </div>

      {/* Child windows */}
      <main className="flex flex-col grow min-h-0 mt-[3px] px-[2px] border-t border-[#808080] bg-[#ababab]">
        <div className="flex grow min-h-0">
          <ChildWindow kind="schematic" title="DADO-TMC-CCS-bootstrap-N-c" active className="flex-609 pr-2">
            <SheetPane />
          </ChildWindow>
          <ChildWindow kind="plot" title="DADO-TMC-CCS-bootstrap-N-c" className="flex-383 pr-[6px]">
            <div className="grow min-h-0 bg-black">
              <Waveform />
            </div>
          </ChildWindow>
        </div>

        <div className="flex h-5 shrink-0">
          {minimized.map((doc, index) => (
            <div
              key={index}
              className="flex items-center gap-[2px] w-[120px] h-[19px] rounded-t-md border border-[#4c5864] bg-linear-to-b from-[#c6d5e5] to-[#d9e4f0] pl-[3px] pr-[6px]"
            >
              <DocIcon kind={doc.kind} />
              <span className="grow pl-px text-[9px] text-[#566474] whitespace-nowrap">{doc.title}</span>
              <CaptionButton glyph="restore" label="Restore" />
              <CaptionButton glyph="max" label="Maximize" />
              <CaptionButton glyph="close" label="Close" />
            </div>
          ))}
        </div>
      </main>

      {/* Status bar */}
      <div className="h-4 shrink-0 border-t border-[#d0cccc] bg-[#f0eded]" />

      <TaskBar />
    </div>
  );
}
